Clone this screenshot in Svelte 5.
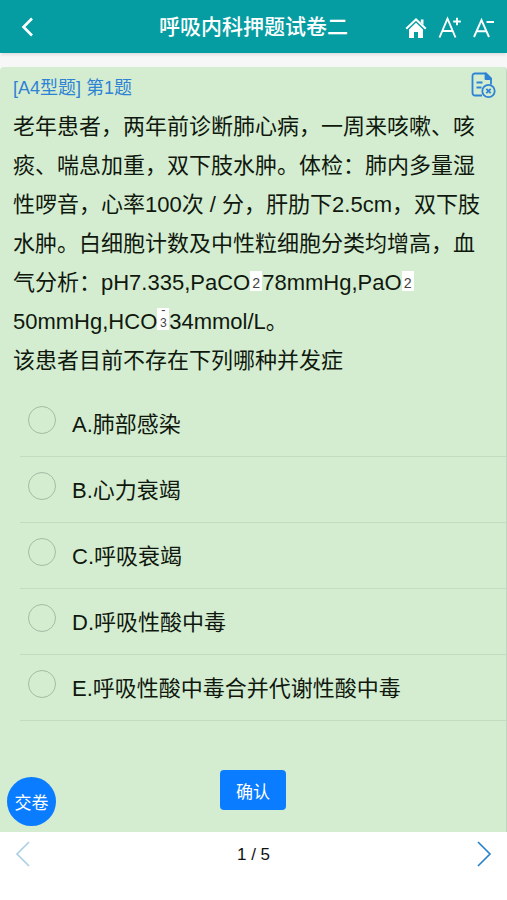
<script lang="ts">
	interface Option {
		key: string;
		text: string;
	}

	const options: Option[] = [
		{ key: 'A', text: '肺部感染' },
		{ key: 'B', text: '心力衰竭' },
		{ key: 'C', text: '呼吸衰竭' },
		{ key: 'D', text: '呼吸性酸中毒' },
		{ key: 'E', text: '呼吸性酸中毒合并代谢性酸中毒' }
	];

	const total = 5;
	let current = $state(1);
	let selected = $state('');
</script>

<div class="page">
	<header class="topbar">
		<button type="button" class="icon-btn back" aria-label="返回">
			<svg width="14" height="20" viewBox="0 0 14 20" fill="none" stroke="currentColor" stroke-width="2.6">
				<path d="M12 1.5 3.5 10l8.5 8.5" />
			</svg>
		</button>
		<h1>呼吸内科押题试卷二</h1>
		<div class="tools">
			<button type="button" class="icon-btn" aria-label="首页">
				<svg width="22" height="22" viewBox="0 0 22 22">
					<path d="M1.2 11.8 11 2.5l9.8 9.3" fill="none" stroke="currentColor" stroke-width="2" />
					<path d="M15.8 2.5h2.7v5.5l-2.7-2.5z" fill="currentColor" />
					<path d="M11 5.8 4 12.4V21h5v-6h4v6h5v-8.6z" fill="currentColor" />
				</svg>
			</button>
			<button type="button" class="icon-btn" aria-label="放大字体">
				<svg width="24" height="24" viewBox="0 0 24 24" fill="none" stroke="currentColor" stroke-width="1.9">
					<path d="M1.5 21.5 9.5 2.6 17.5 21.5M4.5 15h10M15.2 5.5h7.6M19 1.7v7.6" />
				</svg>
			</button>
			<button type="button" class="icon-btn" aria-label="缩小字体">
				<svg width="22" height="22" viewBox="0 0 22 22" fill="none" stroke="currentColor" stroke-width="1.9">
					<path d="M1 20 8.500 3 16 20M4 14.200h9M13.500 5h7.500" />
				</svg>
			</button>
		</div>
	</header>

	<main class="card">
		<div class="card-head">
			<span>[A4型题] 第{current}题</span>
			<button type="button" class="icon-btn" aria-label="移除题目">
				<svg width="26" height="28" viewBox="0 0 26 28" fill="none" stroke="currentColor" stroke-width="1.8" stroke-linejoin="round">
					<path d="M12 23.5H5A2.5 2.5 0 0 1 2.500 21V4A2.500 2.500 0 0 1 5 1.500h11l5 5v6" />
					<path d="M15.500 1.500V7H21z" fill="currentColor" />
					<path d="M6.500 10.500h6M6.500 15.500h5" />
					<circle cx="18.500" cy="19" r="6.200" />
					<path d="m16.300 16.800 4.400 4.400m0-4.400-4.400 4.400" />
				</svg>
			</button>
		</div>

		<p class="stem">
			老年患者，两年前诊断肺心病，一周来咳嗽、咳痰、喘息加重，双下肢水肿。体检：肺内多量湿性啰音，心率100次 / 分，肝肋下2.5cm，双下肢水肿。白细胞计数及中性粒细胞分类均增高，血气分析：pH7.335,PaCO<span class="sub">2</span>78mmHg,PaO<span class="sub">2</span>50mmHg,HCO<span class="ion"><span>-</span><span>3</span></span>34mmol/L。<br />该患者目前不存在下列哪种并发症
		</p>

		<div class="options" role="radiogroup" aria-label="选项">
			{#each options as option}
				<label class="option">
					<input type="radio" name="answer" value={option.key} bind:group={selected} />
					<span>{option.key}.{option.text}</span>
				</label>
			{/each}
		</div>

		<button type="button" class="confirm">确认</button>
		<button type="button" class="submit">交卷</button>
	</main>

	<nav class="pager">
		<button type="button" class="icon-btn" aria-label="上一题" disabled={current === 1} onclick={() => current--}>
			<svg width="16" height="26" viewBox="0 0 16 26" fill="none" stroke="currentColor" stroke-width="1.6">
				<path d="M14 1 2 13l12 12" />
			</svg>
		</button>
		<span>{current} / {total}</span>
		<button type="button" class="icon-btn" aria-label="下一题" disabled={current === total} onclick={() => current++}>
			<svg width="16" height="26" viewBox="0 0 16 26" fill="none" stroke="currentColor" stroke-width="1.6">
				<path d="m2 1 12 12L2 25" />
			</svg>
		</button>
	</nav>
</div>

<style>
	:global(body) {
		margin: 0;
		background: #fff;
	}

	.page {
		display: flex;
		flex-direction: column;
		min-height: 100vh;
		font-family: 'Liberation Sans', 'Noto Sans CJK SC', sans-serif;
		color: #10180e;
	}

	button {
		padding: 0;
		border: none;
		font-family: inherit;
		cursor: pointer;
	}

	.icon-btn {
		display: flex;
		background: transparent;
		color: inherit;
	}

	.topbar {
		position: relative;
		z-index: 1;
		display: grid;
		grid-template-columns: 1fr auto 1fr;
		align-items: center;
		height: 53px;
		padding: 0 12px;
		background: #069da2;
		color: #fff;
		box-shadow: 0 1px 4px rgba(0, 0, 0, 0.15);
	}

	.back {
		padding-left: 8px;
	}

	.topbar h1 {
		margin: 0;
		font-size: 21px;
		font-weight: 500;
		line-height: 53px;
	}

	.tools {
		display: flex;
		align-items: center;
		justify-content: flex-end;
		gap: 11px;
		padding-top: 2px;
	}

	.card {
		position: relative;
		flex: 1;
		display: flex;
		flex-direction: column;
		margin-top: 14px;
		background: #d4edd1;
		border-right: 1px solid #c0d8bf;
		border-radius: 4px 4px 0 0;
		box-shadow: 0 -14px 0 #f7f7f7;
	}

	.card-head {
		display: flex;
		align-items: center;
		justify-content: space-between;
		height: 38px;
		padding: 0 10px 1px 13px;
		font-size: 18px;
		color: #2f83d3;
	}

	.stem {
		margin: 0;
		padding: 1px 13px 0;
		font-size: 22px;
		line-height: 39px;
	}

	.sub,
	.ion {
		display: inline-block;
		width: 12px;
		background: #fff;
		font-family: 'Liberation Mono', monospace;
		text-align: center;
		color: #444;
		vertical-align: bottom;
	}

	.sub {
		margin-bottom: 11px;
		padding-top: 6px;
		font-size: 14px;
		line-height: 14px;
	}

	.ion {
		margin-bottom: 11px;
		font-size: 12px;
	}

	.ion span {
		display: block;
		line-height: 6px;
	}

	.ion span + span {
		padding-top: 4px;
		line-height: 12px;
	}

	.options {
		padding: 11px 0 0 20px;
	}

	.option {
		display: flex;
		align-items: flex-start;
		gap: 16px;
		height: 65px;
		padding-left: 8px;
		border-bottom: 1px solid #c3dcc1;
		font-size: 22px;
		line-height: 68px;
		cursor: pointer;
	}

	.option input {
		appearance: none;
		flex: none;
		width: 28px;
		height: 28px;
		margin: 15px 0 0;
		border: 1px solid #a5bba3;
		border-radius: 50%;
	}

	.option input:checked {
		border: 8px solid #007aff;
	}

	.confirm {
		align-self: center;
		width: 66px;
		height: 40px;
		margin: 49px 0 22px;
		border-radius: 4px;
		background: #0a7cff;
		font-size: 17px;
		color: #fff;
	}

	.submit {
		position: absolute;
		bottom: 6px;
		left: 7px;
		width: 49px;
		height: 49px;
		border-radius: 50%;
		background: #0a7cff;
		font-size: 17px;
		color: #fff;
	}

	.pager {
		display: flex;
		align-items: flex-start;
		justify-content: space-between;
		height: 59px;
		padding: 9px 15px 0;
		background: #fff;
		font-size: 17px;
		line-height: 28px;
		color: #111;
	}

	.pager .icon-btn {
		color: #2380cc;
	}

	.pager .icon-btn:disabled {
		color: #a9cfe8;
	}
</style>
